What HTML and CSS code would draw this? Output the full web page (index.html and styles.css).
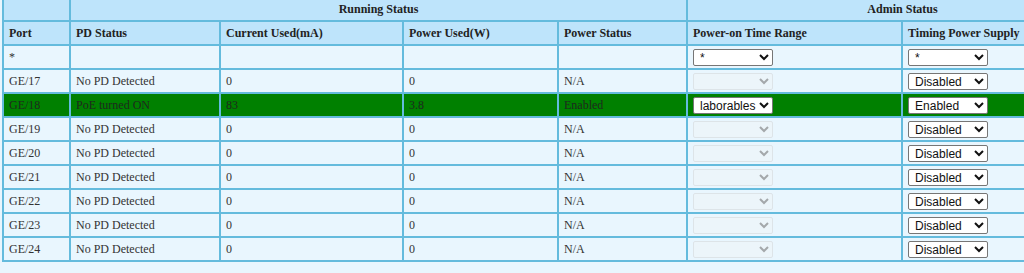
FILE: index.html
```html
<!DOCTYPE html>
<html>
<head>
<meta charset="utf-8">
<link rel="stylesheet" href="styles.css">
</head>
<body>
<table class="poe">
  <colgroup>
    <col class="c-port"><col class="c-pd"><col class="c-cur"><col class="c-pw"><col class="c-ps"><col class="c-range"><col class="c-timing">
  </colgroup>
  <thead>
    <tr class="group">
      <th></th>
      <th colspan="4" class="center">Running Status</th>
      <th colspan="2" class="center">Admin Status</th>
    </tr>
    <tr>
      <th>Port</th><th>PD Status</th><th>Current Used(mA)</th><th>Power Used(W)</th><th>Power Status</th><th>Power-on Time Range</th><th>Timing Power Supply</th>
    </tr>
  </thead>
  <tbody>
    <tr>
      <td>*</td><td></td><td></td><td></td><td></td>
      <td><select class="sel"><option>*</option></select></td>
      <td><select class="sel"><option>*</option></select></td>
    </tr>
    <tr><td>GE/17</td><td>No PD Detected</td><td>0</td><td>0</td><td>N/A</td><td><select class="sel" disabled><option></option></select></td><td><select class="sel"><option>Disabled</option></select></td></tr>
    <tr class="on"><td>GE/18</td><td>PoE turned ON</td><td>83</td><td>3.8</td><td>Enabled</td><td><select class="sel"><option>laborables</option></select></td><td><select class="sel"><option>Enabled</option></select></td></tr>
    <tr><td>GE/19</td><td>No PD Detected</td><td>0</td><td>0</td><td>N/A</td><td><select class="sel" disabled><option></option></select></td><td><select class="sel"><option>Disabled</option></select></td></tr>
    <tr><td>GE/20</td><td>No PD Detected</td><td>0</td><td>0</td><td>N/A</td><td><select class="sel" disabled><option></option></select></td><td><select class="sel"><option>Disabled</option></select></td></tr>
    <tr><td>GE/21</td><td>No PD Detected</td><td>0</td><td>0</td><td>N/A</td><td><select class="sel" disabled><option></option></select></td><td><select class="sel"><option>Disabled</option></select></td></tr>
    <tr><td>GE/22</td><td>No PD Detected</td><td>0</td><td>0</td><td>N/A</td><td><select class="sel" disabled><option></option></select></td><td><select class="sel"><option>Disabled</option></select></td></tr>
    <tr><td>GE/23</td><td>No PD Detected</td><td>0</td><td>0</td><td>N/A</td><td><select class="sel" disabled><option></option></select></td><td><select class="sel"><option>Disabled</option></select></td></tr>
    <tr><td>GE/24</td><td>No PD Detected</td><td>0</td><td>0</td><td>N/A</td><td><select class="sel" disabled><option></option></select></td><td><select class="sel"><option>Disabled</option></select></td></tr>
  </tbody>
</table>
</body>
</html>
```

FILE: styles.css
```css
html, body {
  margin: 0;
  padding: 0;
  background: #e9f6fe;
  overflow: hidden;
}
body {
  font-family: "Liberation Serif", "Times New Roman", serif;
  font-size: 12px;
  color: #333;
}
.poe {
  border-collapse: collapse;
  table-layout: fixed;
  width: 1115px;
  margin: -4px 0 0 2px;
  border: 2px solid #64bbdd;
}
.c-port { width: 67px; }
.c-pd { width: 150px; }
.c-cur { width: 183px; }
.c-pw { width: 155px; }
.c-ps { width: 129px; }
.c-range { width: 215px; }
.c-timing { width: 216px; }
.poe th, .poe td {
  border: 2px solid #64bbdd;
  height: 24px;
  padding: 0 5px;
  text-align: left;
  vertical-align: middle;
  white-space: nowrap;
  box-sizing: border-box;
}
.poe th {
  background: #bee4fb;
  font-weight: bold;
  color: #222;
}
.poe th.center { text-align: center; }
.poe td { background: #e9f6fe; }
.poe tr.on td {
  background: #008000;
  color: #1e2a1e;
}
.sel {
  width: 80px;
  height: 17px;
  font-family: "Liberation Sans", Arial, sans-serif;
  font-size: 12px;
  color: #111;
  background: #fff;
  border: 1px solid #767676;
  border-radius: 2px;
  padding: 0 0 0 2px;
  margin: 0;
  vertical-align: middle;
}
.sel:disabled {
  background: #eef5f9;
  border-color: #d8dde0;
  color: #888;
}
```
